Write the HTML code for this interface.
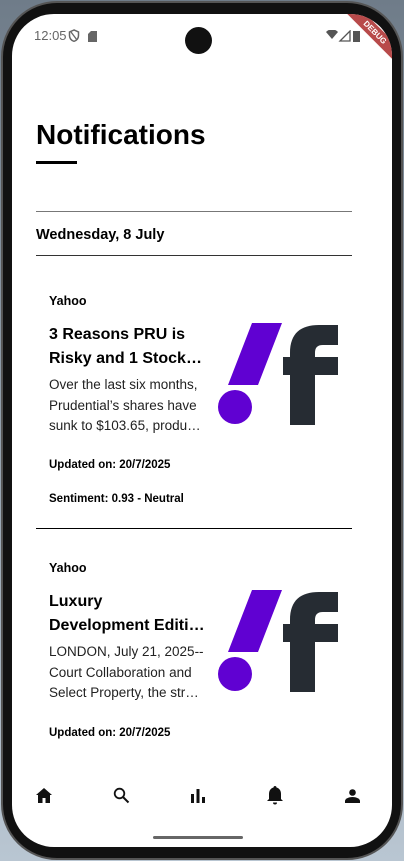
<!DOCTYPE html>
<html><head><meta charset="utf-8"><style>
*{margin:0;padding:0;box-sizing:border-box}
body{width:404px;height:861px;overflow:hidden;background:linear-gradient(180deg,#6f7c89,#b9c6d2);font-family:"Liberation Sans",Roboto,sans-serif;position:relative}
.frame{position:absolute;left:1px;top:1px;width:402px;height:859px;border-radius:56px;background:#111;border:2px solid #555}
.screen{position:absolute;left:12px;top:14px;width:380px;height:833px;border-radius:42px;background:#fff;overflow:hidden}
.a{position:absolute;color:#000;white-space:nowrap}
.hr{position:absolute;left:24px;width:316px;height:1px;background:#333}
.sb{font-size:13px;color:#666}
.src{font-size:12.5px;font-weight:bold}
.hd{font-size:16px;font-weight:bold;line-height:24px}
.bd{font-size:13.5px;line-height:20.5px;color:#222}
.sm{font-size:11.5px;font-weight:bold}
</style></head><body>
<div class="frame"></div>
<div class="screen">
 <div class="a sb" style="left:22px;top:14px">12:05</div>
 <svg class="a" style="left:56px;top:15px" width="12" height="13" viewBox="0 0 12 13"><path d="M6 1L1.5 3v3.5c0 3 2 5 4.5 5.8 2.5-.8 4.5-2.8 4.5-5.8V3z" fill="none" stroke="#666" stroke-width="1.5"/><path d="M3 3l6 8" stroke="#666" stroke-width="1.3"/></svg>
 <svg class="a" style="left:76px;top:17px" width="9" height="11"><path d="M3 0h6v11H0V3z" fill="#666"/></svg>
 <div class="a" style="left:173px;top:13px;width:27px;height:27px;border-radius:50%;background:#111"></div>
 <svg class="a" style="left:314px;top:16px" width="40" height="12"><path d="M0 2a8 8 0 0 1 12 0l-6 7z" fill="#555"/><path d="M24 1v10H14z" fill="none" stroke="#555" stroke-width="1.3"/><rect x="27" y="1" width="7" height="11" fill="#555"/></svg>
 <div class="a" style="left:318px;top:12px;width:90px;height:13px;background:#b84a4a;transform:rotate(45deg);color:#fff;font-size:8px;font-weight:bold;text-align:center;line-height:13px">DEBUG</div>

 <div class="a" style="left:24px;top:105px;font-size:28px;font-weight:bold">Notifications</div>
 <div class="a" style="left:24px;top:147px;width:41px;height:3px;background:#000"></div>
 <div class="hr" style="top:197px;background:#777"></div>
 <div class="a" style="left:24px;top:213px;font-size:14.5px;font-weight:bold">Wednesday, 8 July</div>
 <div class="hr" style="top:241px"></div>

 <div class="a src" style="left:37px;top:280px">Yahoo</div>
 <div class="a hd" style="left:37px;top:309px">3 Reasons PRU is<br>Risky and 1 Stock…</div>
 <div class="a bd" style="left:37px;top:361px">Over the last six months,<br>Prudential’s shares have<br>sunk to $103.65, produ…</div>
 <div class="a sm" style="left:37px;top:445px">Updated on: 20/7/2025</div>
 <div class="a sm" style="left:37px;top:479px">Sentiment: 0.93 - Neutral</div>
 <svg class="a" style="left:201px;top:309px" width="125" height="102" viewBox="0 0 125 102"><path d="M39 0h30L45 62H15z" fill="#6001d2"/><circle cx="22" cy="84" r="17" fill="#6001d2"/><path d="M77 102V30C77 10 88 2 106 2H125V22H110C104 22 102 25 102 30V102Z" fill="#262c33"/><rect x="70" y="34" width="55" height="18" fill="#262c33"/></svg>
 <div class="hr" style="top:514px;background:#000"></div>

 <div class="a src" style="left:37px;top:547px">Yahoo</div>
 <div class="a hd" style="left:37px;top:576px">Luxury<br>Development Editi…</div>
 <div class="a bd" style="left:37px;top:628px">LONDON, July 21, 2025--<br>Court Collaboration and<br>Select Property, the str…</div>
 <div class="a sm" style="left:37px;top:713px">Updated on: 20/7/2025</div>
 <svg class="a" style="left:201px;top:576px" width="125" height="102" viewBox="0 0 125 102"><path d="M39 0h30L45 62H15z" fill="#6001d2"/><circle cx="22" cy="84" r="17" fill="#6001d2"/><path d="M77 102V30C77 10 88 2 106 2H125V22H110C104 22 102 25 102 30V102Z" fill="#262c33"/><rect x="70" y="34" width="55" height="18" fill="#262c33"/></svg>

 <svg class="a" style="left:24px;top:774px" width="16" height="15" viewBox="0 0 16 15"><path d="M8 0L0 7h2v8h4.5v-5h3v5H14V7h2z" fill="#111"/></svg>
 <svg class="a" style="left:101px;top:773px" width="17" height="17" viewBox="0 0 17 17"><circle cx="6.5" cy="6.5" r="4.8" fill="none" stroke="#111" stroke-width="1.8"/><path d="M10 10l5.5 5.5" stroke="#111" stroke-width="2"/></svg>
 <svg class="a" style="left:179px;top:775px" width="15" height="14"><rect x="0" y="5" width="3" height="9" fill="#111"/><rect x="5.5" y="0" width="3" height="14" fill="#111"/><rect x="11" y="8" width="3" height="6" fill="#111"/></svg>
 <svg class="a" style="left:254px;top:771px" width="18" height="20" viewBox="0 0 18 20"><path d="M9 1c-1 0-1.5.7-1.5 1.5C4.5 3.3 3 5.8 3 9v5l-2 2h16l-2-2V9c0-3.2-1.5-5.7-4.5-6.5C10.5 1.7 10 1 9 1z" fill="#111"/><path d="M7 17.5h4a2 2 0 0 1-4 0z" fill="#111"/></svg>
 <svg class="a" style="left:333px;top:775px" width="15" height="14" viewBox="0 0 15 14"><circle cx="7.5" cy="3.5" r="3.3" fill="#111"/><path d="M0 14v-2c0-2.5 4-4 7.5-4s7.5 1.5 7.5 4v2z" fill="#111"/></svg>
 <div class="a" style="left:141px;top:822px;width:90px;height:3px;border-radius:2px;background:#666"></div>
</div>
</body></html>
